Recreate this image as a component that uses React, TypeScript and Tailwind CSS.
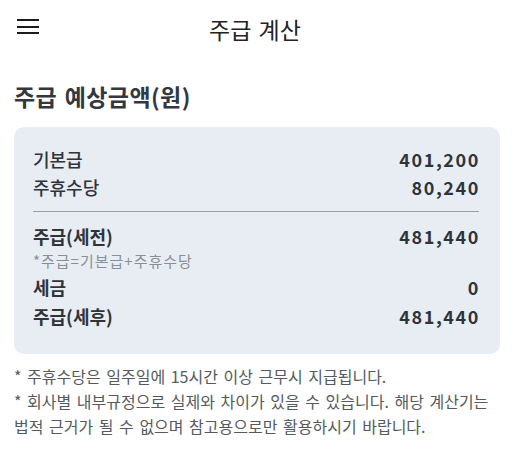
import React from "react";

const rows1 = [
  { label: "기본급", value: "401,200" },
  { label: "주휴수당", value: "80,240" },
];

export default function App() {
  return (
    <div
      className="w-[514px] h-[464px] bg-white text-[#2f343b] overflow-hidden"
      style={{ fontFamily: '"Noto Sans CJK KR", "Noto Sans", sans-serif' }}
    >
      <div className="relative h-[60px] flex items-center justify-center">
        <div className="absolute left-[17px] top-[19px] flex flex-col gap-[4.5px]">
          <div className="w-[22px] h-[2px] bg-[#1c1c1c]" />
          <div className="w-[22px] h-[2px] bg-[#1c1c1c]" />
          <div className="w-[22px] h-[2px] bg-[#1c1c1c]" />
        </div>
        <div className="text-[23px] text-[#222] leading-none -mt-[2px] -ml-[4px] [word-spacing:2px]">주급 계산</div>
      </div>
      <div className="px-[14px]">
        <div className="mt-[22px] text-[23px] font-bold leading-[28px] text-[#333840] tracking-[0.4px] [word-spacing:2px]">주급 예상금액(원)</div>
        <div className="mt-[17px] rounded-[10px] bg-[#e8edf4] pl-[19px] pr-[20px] pt-[18px] pb-[24px]">
          {rows1.map((r) => (
            <div key={r.label} className="flex justify-between text-[18px] leading-[28px] font-medium">
              <span>{r.label}</span>
              <span className="font-bold tracking-[1.6px]">{r.value}</span>
            </div>
          ))}
          <div className="h-px bg-[#9a9ea4] my-[10px] mr-[1px]" />
          <div className="flex justify-between text-[18px] leading-[28px] font-bold">
            <span>주급(세전)</span>
            <span className="tracking-[1.6px]">481,440</span>
          </div>
          <div className="text-[15px] leading-[22px] text-[#8a8f96] tracking-[1px]">*주급=기본급+주휴수당</div>
          <div className="flex justify-between text-[18px] leading-[30px] font-bold">
            <span>세금</span>
            <span className="tracking-[1.6px]">0</span>
          </div>
          <div className="flex justify-between text-[18px] leading-[28px] font-bold">
            <span>주급(세후)</span>
            <span className="tracking-[1.6px]">481,440</span>
          </div>
        </div>
        <div className="mt-[10px] text-[16px] leading-[25px] text-[#555a60] [word-spacing:2px]">
          <div>* 주휴수당은 일주일에 15시간 이상 근무시 지급됩니다.</div>
          <div>* 회사별 내부규정으로 실제와 차이가 있을 수 있습니다. 해당 계산기는 법적 근거가 될 수 없으며 참고용으로만 활용하시기 바랍니다.</div>
        </div>
      </div>
    </div>
  );
}
